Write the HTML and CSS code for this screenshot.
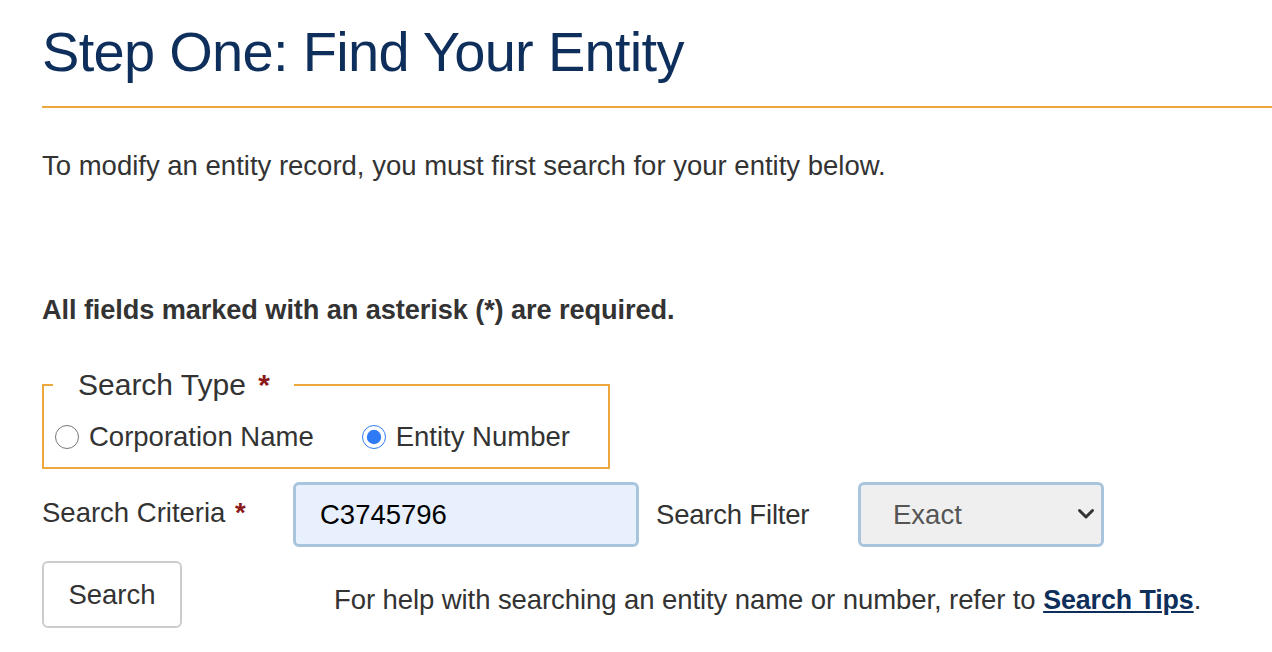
FILE: index.html
```html
<!DOCTYPE html>
<html lang="en">
<head>
<meta charset="utf-8">
<title>Step One: Find Your Entity</title>
<link rel="stylesheet" href="styles.css">
</head>
<body>
<main class="page">
  <h1 class="title">Step One: Find Your Entity</h1>
  <hr class="rule">
  <p class="intro">To modify an entity record, you must first search for your entity below.</p>
  <p class="required-note">All fields marked with an asterisk (*) are required.</p>
  <fieldset class="search-type">
    <legend class="legend">Search Type <span class="req">*</span></legend>
    <label class="radio"><input type="radio" name="stype"> Corporation Name</label>
    <label class="radio"><input type="radio" name="stype" checked> Entity Number</label>
  </fieldset>
  <div class="criteria-row">
    <label class="label crit-label" for="crit">Search Criteria <span class="req">*</span></label>
    <input class="text-input" id="crit" type="text" value="C3745796">
    <label class="label filter-label" for="filter">Search Filter</label>
    <div class="select-wrap">
      <select class="select" id="filter">
        <option>Exact</option>
        <option>Contains</option>
      </select>
      <svg class="chev" viewBox="0 0 18 12" width="18" height="12" aria-hidden="true"><path d="M2.5 2.5 L9 9 L15.5 2.5" fill="none" stroke="#333" stroke-width="3" stroke-linecap="round" stroke-linejoin="round"/></svg>
    </div>
  </div>
  <div class="action-row">
    <button class="btn" type="button">Search</button>
    <p class="help">For help with searching an entity name or number, refer to <a class="link" href="#">Search Tips</a>.</p>
  </div>
</main>
</body>
</html>
```

FILE: styles.css
```css
* { box-sizing: border-box; }
html, body { margin: 0; padding: 0; background: #fff; }
body {
  font-family: "Liberation Sans", Arial, Helvetica, sans-serif;
  color: #333;
  font-size: 27.5px;
}
.page {
  padding: 0 0 0 42px;
}
.title {
  margin: 0;
  padding-top: 20px;
  font-size: 56px;
  letter-spacing: -0.7px;
  font-weight: normal;
  color: #0e2f5b;
  line-height: 64px;
}
.rule {
  margin: 22px 0 0 0;
  border: 0;
  border-top: 2px solid #eca83c;
  height: 0;
}
.intro {
  margin: 42px 0 0 0;
  line-height: 32px;
}
.required-note {
  margin: 112px 0 0 0;
  font-weight: bold;
  font-size: 27.2px;
  letter-spacing: -0.1px;
  line-height: 32px;
}
.search-type {
  margin: 41px 0 0 0;
  width: 568px;
  min-width: 0;
  border: 2px solid #eca83c;
  padding: 16px 10px 12px 11px;
  display: flex;
  gap: 48px;
}
.legend {
  padding: 0 24px 0 25px;
  margin-left: -2px;
  font-size: 30px;
  line-height: 36px;
}
.req { color: #8b1a1a; font-weight: bold; }
.legend .req { margin-left: 4px; }
.radio {
  display: flex;
  align-items: center;
  gap: 10px;
  line-height: 36px;
}
.radio input {
  width: 24px;
  height: 24px;
  margin: 0;
  accent-color: #2f7bf5;
}
.criteria-row {
  display: flex;
  align-items: center;
  margin-top: 13px;
}
.crit-label { width: 251px; margin-top: -4px; }
.crit-label .req { margin-left: 2px; }
.text-input {
  width: 346px;
  height: 65px;
  border: 3px solid #a9c5dd;
  border-radius: 6px;
  background: #e8f0fe;
  font-family: inherit;
  font-size: 27.5px;
  color: #000;
  padding: 0 24px;
}
.filter-label { margin-left: 17px; width: 202px; letter-spacing: -0.2px; }
.select-wrap {
  position: relative;
}
.select {
  appearance: none;
  -webkit-appearance: none;
  width: 246px;
  height: 65px;
  border: 3px solid #a9c5dd;
  border-radius: 6px;
  background: #efefef;
  font-family: inherit;
  font-size: 27.5px;
  color: #555;
  padding: 0 32px;
}
.chev {
  position: absolute;
  right: 9px;
  top: 26px;
  pointer-events: none;
}
.action-row {
  display: flex;
  align-items: center;
  margin-top: 14px;
}
.btn {
  width: 140px;
  height: 67px;
  background: #fff;
  border: 2px solid #ccc;
  border-radius: 6px;
  font-family: inherit;
  font-size: 27.5px;
  color: #333;
  padding: 0;
}
.help {
  margin: 10px 0 0 152px;
  line-height: 32px;
  letter-spacing: -0.08px;
}
.link {
  color: #0e2f5b;
  font-weight: bold;
  font-size: 26.8px;
  text-decoration: underline;
}
```
